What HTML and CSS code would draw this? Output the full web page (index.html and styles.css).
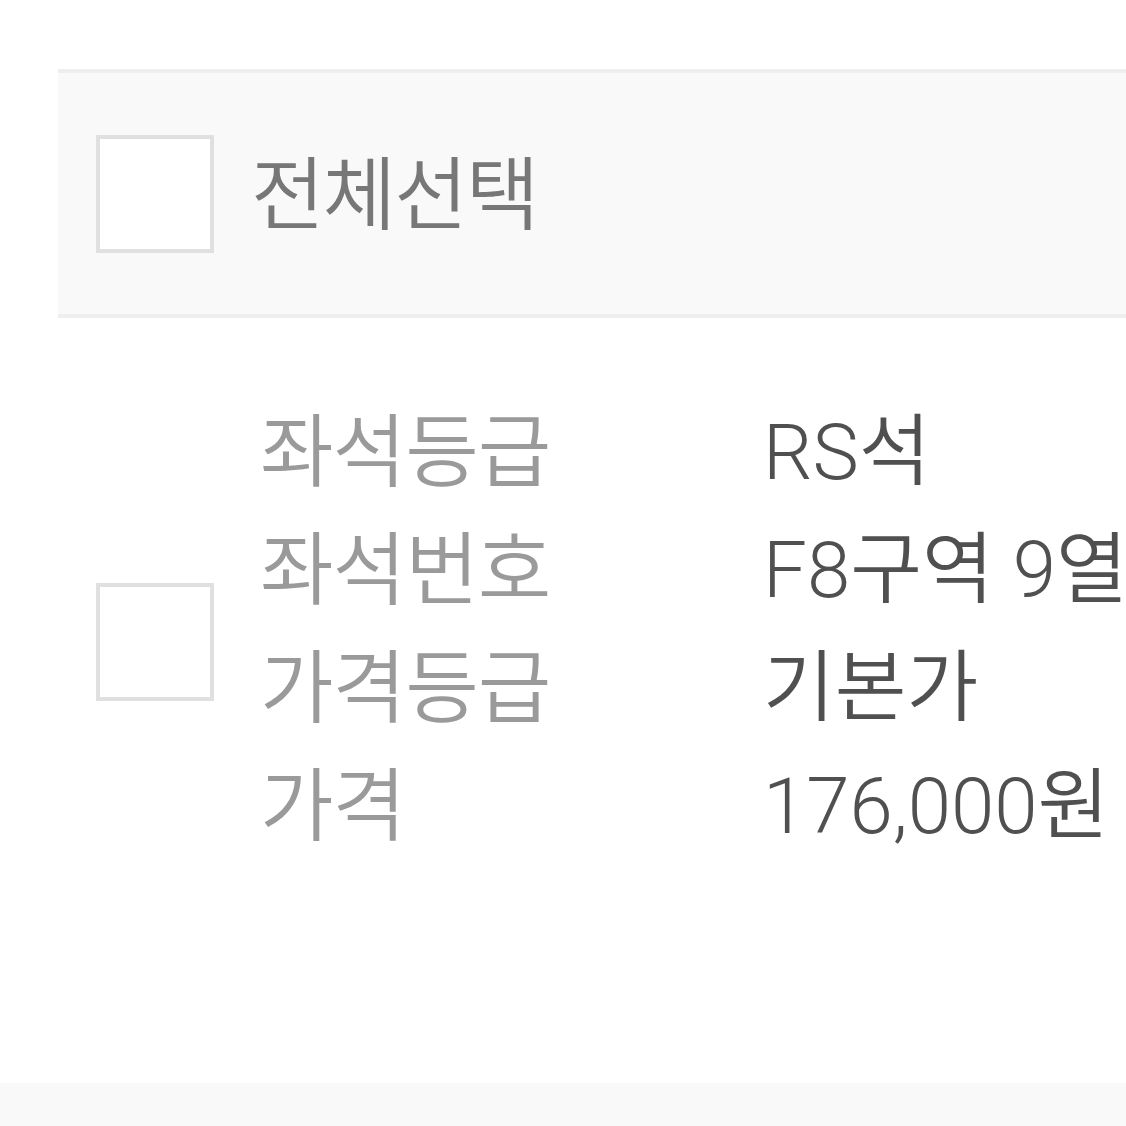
FILE: index.html
```html
<!DOCTYPE html>
<html lang="ko">
<head>
    <meta charset="UTF-8">
    <meta name="viewport" content="width=device-width, initial-scale=1.0">
    <title>좌석 선택</title>
    <link rel="stylesheet" href="styles.css">
</head>
<body>
    <div class="seat-list">
        <div class="select-all">
            <span class="checkbox"></span>
            <span class="select-all-label">전체선택</span>
        </div>
        <div class="seat-row">
            <span class="checkbox row-check"></span>
            <div class="seat-info">
                <span class="label">좌석등급</span>
                <span class="value">RS석</span>
                <span class="label">좌석번호</span>
                <span class="value">F8구역 9열</span>
                <span class="label">가격등급</span>
                <span class="value">기본가</span>
                <span class="label">가격</span>
                <span class="value">176,000원</span>
            </div>
        </div>
    </div>
    <div class="bottom-bar"></div>
</body>
</html>
```

FILE: styles.css
```css
html, body {
    margin: 0;
    height: 100%;
    overflow: hidden;
    background: #fff;
    font-family: Roboto, "Noto Sans CJK KR", sans-serif;
}
.seat-list {
    margin-left: 58px;
    padding-top: 69px;
    width: 1200px;
}
.select-all {
    display: flex;
    align-items: center;
    height: 241px;
    padding-left: 38px;
    background: #f9f9f9;
    border-top: 4px solid #eeeeee;
    border-bottom: 4px solid #eeeeee;
}
.checkbox {
    display: block;
    box-sizing: border-box;
    width: 118px;
    height: 118px;
    flex-shrink: 0;
    background: #fff;
    border: 4px solid #e0e0e0;
}
.select-all-label {
    margin: 4px 0 0 37px;
    font-size: 80px;
    font-weight: 350;
    line-height: 1;
    letter-spacing: -2px;
    color: #777;
}
.seat-row {
    display: flex;
    align-items: flex-start;
    height: 689px;
    padding: 76px 0 0 38px;
    white-space: nowrap;
}
.row-check {
    margin-top: 189px;
}
.seat-info {
    display: grid;
    grid-template-columns: 503px auto;
    margin-left: 46px;
    line-height: 118px;
    font-weight: 350;
}
.label {
    font-size: 80px;
    letter-spacing: -1px;
    color: #9a9a9a;
}
.value {
    font-size: 78px;
    color: #505050;
}
.bottom-bar {
    height: 60px;
    background: #f9f9f9;
}
```
